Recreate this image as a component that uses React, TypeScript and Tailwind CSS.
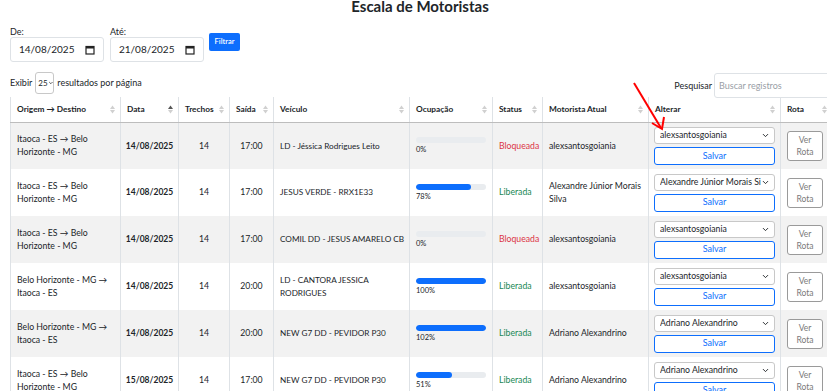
import React from 'react';
import { ChevronDown } from 'lucide-react';

type Row = {
  route: string;
  date: string;
  legs: string;
  time: string;
  vehicle: string;
  occupancy: number;
  status: 'Bloqueada' | 'Liberada';
  driver: string;
  selected: string;
};

const rows: Row[] = [
  { route: 'Itaoca - ES → Belo Horizonte - MG', date: '14/08/2025', legs: '14', time: '17:00', vehicle: 'LD - Jéssica Rodrigues Leito', occupancy: 0, status: 'Bloqueada', driver: 'alexsantosgoiania', selected: 'alexsantosgoiania' },
  { route: 'Itaoca - ES → Belo Horizonte - MG', date: '14/08/2025', legs: '14', time: '17:00', vehicle: 'JESUS VERDE - RRX1E33', occupancy: 78, status: 'Liberada', driver: 'Alexandre Júnior Morais Silva', selected: 'Alexandre Júnior Morais Silva' },
  { route: 'Itaoca - ES → Belo Horizonte - MG', date: '14/08/2025', legs: '14', time: '17:00', vehicle: 'COMIL DD - JESUS AMARELO CB', occupancy: 0, status: 'Bloqueada', driver: 'alexsantosgoiania', selected: 'alexsantosgoiania' },
  { route: 'Belo Horizonte - MG → Itaoca - ES', date: '14/08/2025', legs: '14', time: '20:00', vehicle: 'LD - CANTORA JESSICA RODRIGUES', occupancy: 100, status: 'Liberada', driver: 'alexsantosgoiania', selected: 'alexsantosgoiania' },
  { route: 'Belo Horizonte - MG → Itaoca - ES', date: '14/08/2025', legs: '14', time: '20:00', vehicle: 'NEW G7 DD - PEVIDOR P30', occupancy: 102, status: 'Liberada', driver: 'Adriano Alexandrino', selected: 'Adriano Alexandrino' },
  { route: 'Itaoca - ES → Belo Horizonte - MG', date: '15/08/2025', legs: '14', time: '17:00', vehicle: 'NEW G7 DD - PEVIDOR P30', occupancy: 51, status: 'Liberada', driver: 'Adriano Alexandrino', selected: 'Adriano Alexandrino' },
];

const columns = [
  { label: 'Origem → Destino', w: 'w-[110px]' },
  { label: 'Data', w: 'w-[58px]', active: true },
  { label: 'Trechos', w: 'w-[51px]' },
  { label: 'Saída', w: 'w-[44px]' },
  { label: 'Veículo', w: 'w-[136px]' },
  { label: 'Ocupação', w: 'w-[83px]' },
  { label: 'Status', w: 'w-[50px]' },
  { label: 'Motorista Atual', w: 'w-[106px]' },
  { label: 'Alterar', w: 'w-[132px]' },
  { label: 'Rota', w: 'w-[52px]' },
];

const SortIcon = ({ active }: { active?: boolean }) => (
  <svg width="5" height="9" viewBox="0 0 5 9" className="shrink-0">
    <path d="M0 4 L2.5 0.5 L5 4 Z" fill={active ? '#555' : '#d0d0d0'} />
    <path d="M0 5 L2.5 8.5 L5 5 Z" fill="#d0d0d0" />
  </svg>
);

const CalendarIcon = () => (
  <svg width="10" height="10" viewBox="0 0 10 10">
    <rect x="1" y="1.5" width="8" height="7.5" fill="none" stroke="#222" strokeWidth="1.2" />
    <rect x="1" y="1.5" width="8" height="2" fill="#222" />
  </svg>
);

const DateInput = ({ value }: { value: string }) => (
  <div className="w-[94px] h-[25px] flex items-center justify-between pl-[8px] pr-[8px] border border-[#dee2e6] rounded-[3px] text-[10px]">
    <span>{value}</span>
    <CalendarIcon />
  </div>
);

export default function App() {
  return (
    <div className="relative w-[827px] h-[391px] overflow-hidden bg-white text-[#212529] font-['Lato',sans-serif]">
      <div className="w-[840px] -mt-[4px] text-center text-[15px] font-bold leading-[20px]">Escala de Motoristas</div>

      <div className="px-[10px]">
        {/* Filtro */}
        <div className="flex items-start gap-[6px] mt-[10px]">
          <div>
            <div className="text-[9px] leading-[11px]">De:</div>
            <DateInput value="14/08/2025" />
          </div>
          <div>
            <div className="text-[9px] leading-[11px]">Até:</div>
            <DateInput value="21/08/2025" />
          </div>
          <button className="mt-[7px] ml-[-1px] w-[31px] h-[18px] rounded-[2px] bg-[#0d6efd] text-white text-[7.5px] font-semibold">
            Filtrar
          </button>
        </div>

        {/* Controles */}
        <div className="flex items-start justify-between h-[25px] mt-[10px]">
          <div className="flex items-center gap-[3px] h-[22px] text-[9px]">
            <span>Exibir</span>
            <div className="w-[19px] h-[22px] border border-[#c8c8c8] rounded-[3px] flex items-center pl-[2px] text-[8px]">
              25<ChevronDown size={6} strokeWidth={3} />
            </div>
            <span>resultados por página</span>
          </div>
          <div className="flex items-center gap-[2px] mt-[1px] -mr-[20px] text-[9px]">
            <span>Pesquisar</span>
            <div className="w-[123px] h-[25px] border border-[#dee2e6] rounded-[3px] flex items-center pl-[4px] text-[#9aa0a6]">
              Buscar registros
            </div>
          </div>
        </div>

        {/* Tabela */}
        <table className="table-fixed border-collapse w-[822px] text-[8.7px] leading-[12.5px]">
          <thead>
            <tr className="h-[25px]">
              {columns.map((c) => (
                <th key={c.label} className={`${c.w} border-x border-[#dee2e6] border-b border-b-[#bdbdbd] pl-[6px] pr-[5px] font-bold text-left text-[8.3px]`}>
                  <div className="flex items-center justify-between">
                    <span className="whitespace-nowrap">{c.label}</span>
                    <SortIcon active={c.active} />
                  </div>
                </th>
              ))}
            </tr>
          </thead>
          <tbody>
            {rows.map((r, i) => (
              <tr key={i} className={`h-[47px] ${i % 2 === 0 ? 'bg-[#f2f2f2]' : 'bg-white'}`}>
                <td className="border-x border-[#dee2e6] px-[6px]">{r.route}</td>
                <td className="border-x border-[#dee2e6] px-[4px] text-center font-bold text-[8.5px]">{r.date}</td>
                <td className="border-x border-[#dee2e6] text-center">{r.legs}</td>
                <td className="border-x border-[#dee2e6] text-center">{r.time}</td>
                <td className="border-x border-[#dee2e6] pl-[6px] pr-[1px] text-[8.2px]">{r.vehicle}</td>
                <td className="border-x border-[#dee2e6] px-[6px]">
                  <div className="h-[6px] rounded-full bg-[#e9ecef] overflow-hidden">
                    <div className="h-full rounded-full bg-[#0d6efd]" style={{ width: `${Math.min(r.occupancy, 100)}%` }} />
                  </div>
                  <div className="text-[7.5px] leading-[10px] mt-[2px]">{r.occupancy}%</div>
                </td>
                <td className={`border-x border-[#dee2e6] px-[6px] ${r.status === 'Bloqueada' ? 'text-[#dc3545]' : 'text-[#198754]'}`}>
                  {r.status}
                </td>
                <td className="border-x border-[#dee2e6] px-[6px]">{r.driver}</td>
                <td className="border-x border-[#dee2e6] px-[5px]">
                  <div className="flex flex-col gap-[3px]">
                    <div className="h-[17px] border border-[#c8c8c8] rounded-[3px] bg-white flex items-center justify-between pl-[5px] pr-[4px] overflow-hidden">
                      <span className="whitespace-nowrap overflow-hidden">{r.selected}</span>
                      <ChevronDown size={9} strokeWidth={2.5} className="shrink-0" />
                    </div>
                    <button className="h-[18px] border border-[#0d6efd] rounded-[3px] bg-white text-[#0d6efd] text-[9px]">Salvar</button>
                  </div>
                </td>
                <td className="border-x border-[#dee2e6] pl-[6px]">
                  <button className="w-[36px] h-[30px] border border-[#9a9a9a] rounded-[3px] text-[#7a7a7a] text-[8.5px] leading-[12px] bg-white">
                    Ver
                    <br />
                    Rota
                  </button>
                </td>
              </tr>
            ))}
          </tbody>
        </table>
      </div>

      {/* Seta vermelha */}
      <svg className="absolute left-0 top-0 pointer-events-none" width="827" height="391">
        <line x1="634" y1="83" x2="661" y2="128" stroke="#ff0000" strokeWidth="2" />
        <polyline points="652,123 662,129 664,117" fill="none" stroke="#ff0000" strokeWidth="2" />
      </svg>
    </div>
  );
}
